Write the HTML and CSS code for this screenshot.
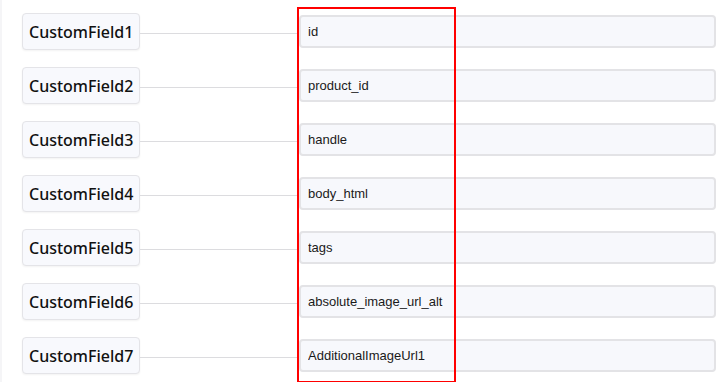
FILE: index.html
```html
<!DOCTYPE html>
<html lang="en">
<head>
    <meta charset="UTF-8">
    <meta name="viewport" content="width=device-width, initial-scale=1.0">
    <title>Field Mapping</title>
    <link rel="stylesheet" href="styles.css">
</head>
<body>
    <div class="mapping">
        <div class="map-row">
            <div class="field-label">CustomField1</div>
            <div class="connector"></div>
            <input class="field-input" type="text" value="id" readonly>
        </div>
        <div class="map-row">
            <div class="field-label">CustomField2</div>
            <div class="connector"></div>
            <input class="field-input" type="text" value="product_id" readonly>
        </div>
        <div class="map-row">
            <div class="field-label">CustomField3</div>
            <div class="connector"></div>
            <input class="field-input" type="text" value="handle" readonly>
        </div>
        <div class="map-row">
            <div class="field-label">CustomField4</div>
            <div class="connector"></div>
            <input class="field-input" type="text" value="body_html" readonly>
        </div>
        <div class="map-row">
            <div class="field-label">CustomField5</div>
            <div class="connector"></div>
            <input class="field-input" type="text" value="tags" readonly>
        </div>
        <div class="map-row">
            <div class="field-label">CustomField6</div>
            <div class="connector"></div>
            <input class="field-input" type="text" value="absolute_image_url_alt" readonly>
        </div>
        <div class="map-row">
            <div class="field-label">CustomField7</div>
            <div class="connector"></div>
            <input class="field-input" type="text" value="AdditionalImageUrl1" readonly>
        </div>
        <div class="highlight"></div>
    </div>
</body>
</html>
```
FILE: styles.css
```css
body {
    margin: 0;
    background-color: #ffffff;
    font-family: 'Noto Sans', 'Open Sans', sans-serif;
}
.mapping {
    position: relative;
    padding-top: 4px;
    border-left: 2px solid #f5f5f7;
    height: 382px;
    box-sizing: border-box;
}
.map-row {
    display: flex;
    align-items: flex-start;
    height: 54px;
}
.field-label {
    margin-left: 20px;
    margin-top: 9px;
    width: 118px;
    height: 37px;
    box-sizing: border-box;
    padding: 0 6px;
    display: flex;
    align-items: center;
    background-color: #f8f9fd;
    border: 1px solid #e4e4e8;
    border-radius: 4px;
    box-shadow: 0 1px 2px rgba(0, 0, 0, 0.05);
    font-size: 16px;
    font-weight: 500;
    color: #111111;
    white-space: nowrap;
}
.connector {
    width: 159px;
    height: 1px;
    margin-top: 29px;
    background-color: #dcdcdf;
}
.field-input {
    margin-top: 11px;
    width: 417px;
    height: 33px;
    box-sizing: border-box;
    padding: 0 7px;
    background-color: #f7f8fc;
    border: 2px solid #e3e3e6;
    border-radius: 4px;
    font-family: 'Liberation Sans', Arial, sans-serif;
    font-size: 13px;
    color: #1a1a1a;
    outline: none;
}
.highlight {
    position: absolute;
    left: 295px;
    top: 7px;
    width: 159px;
    height: 376px;
    box-sizing: border-box;
    border: 2px solid #ff0000;
}
```
